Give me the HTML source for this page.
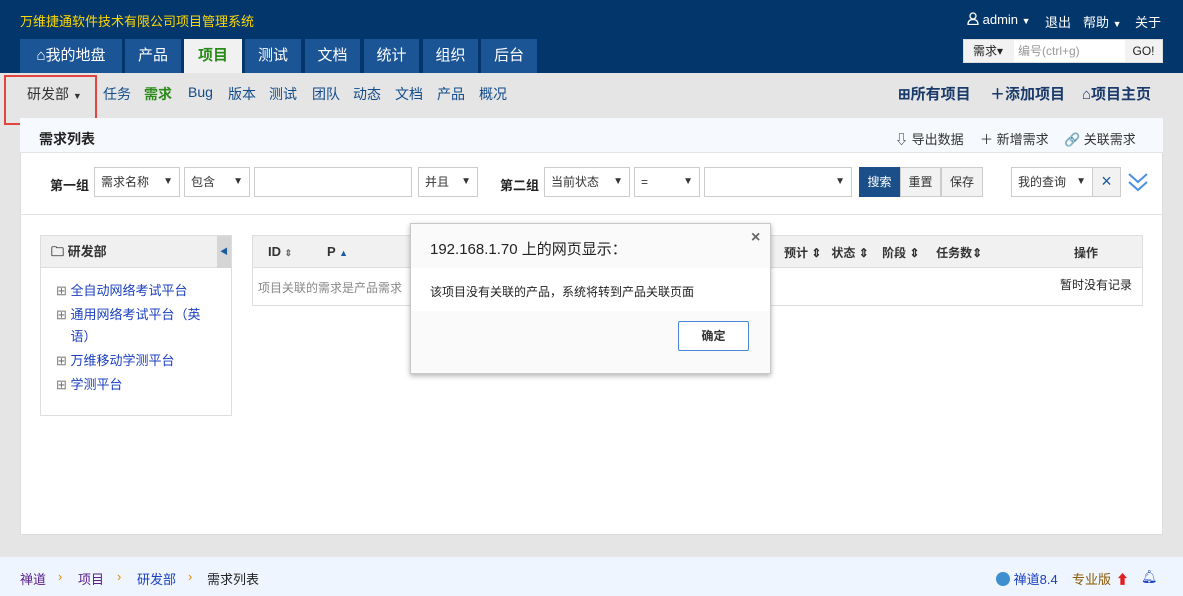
<!DOCTYPE html>
<html><head><meta charset="utf-8"><style>
*{margin:0;padding:0;box-sizing:border-box}
body{width:1183px;height:596px;overflow:hidden;background:#e5e5e5;font-family:"Liberation Sans","Noto Sans CJK SC",sans-serif;font-size:13px;color:#333;position:relative}
.abs{position:absolute}
#hd{left:0;top:0;width:1183px;height:73px;background:#03366a}
.tab{position:absolute;top:39px;height:34px;background:#1b5596;color:#fff;font-size:15px;line-height:34px;text-align:center}
.tab.on{background:#f1f1f1;color:#2a8a1a;font-weight:bold}
.sub{position:absolute;top:84px;font-size:14px;color:#124b8a}
.rn{position:absolute;top:83px;font-weight:bold;font-size:15px;color:#1a3a6a}
.sel{position:absolute;height:30px;border:1px solid #ccc;background:#fff;font-size:12px;line-height:28px;padding-left:6px}
.sel.a:after{content:"▼";position:absolute;right:6px;font-size:10px}
.hl{position:absolute;top:12px;color:#fff;font-size:13px}
.pa{position:absolute;top:129px;color:#333}
.ft{position:absolute;top:569px;font-size:13px}
</style></head><body>
<div id="hd" class="abs"></div>
<div class="abs" style="left:20px;top:11px;color:#ffd800;font-size:13px">万维捷通软件技术有限公司项目管理系统</div>
<div class="hl" style="left:967px"><svg width="12" height="13" viewBox="0 0 12 13" style="vertical-align:-1px"><circle cx="6" cy="4" r="3" fill="none" stroke="#fff" stroke-width="1.3"/><path d="M1 12.5Q1 7.5 6 7.5Q11 7.5 11 12.5Z" fill="none" stroke="#fff" stroke-width="1.3"/></svg> admin <span style="font-size:9px">▼</span></div>
<div class="hl" style="left:1045px">退出</div>
<div class="hl" style="left:1083px">帮助 <span style="font-size:9px">▼</span></div>
<div class="hl" style="left:1135px">关于</div>
<div class="abs" style="left:963px;top:39px;width:200px;height:24px;background:#fff;border:1px solid #ddd"></div>
<div class="abs" style="left:964px;top:40px;width:50px;height:22px;background:#f2f2f2;font-size:12px;line-height:22px;padding-left:9px;color:#222">需求▾</div>
<div class="abs" style="left:1018px;top:40px;font-size:12px;line-height:22px;color:#999">编号(ctrl+g)</div>
<div class="abs" style="left:1125px;top:40px;width:37px;height:22px;background:#f2f2f2;font-size:12px;line-height:22px;text-align:center;color:#222">GO!</div>
<div class="tab" style="left:20px;width:102px">⌂我的地盘</div>
<div class="tab" style="left:125px;width:56px">产品</div>
<div class="tab on" style="left:184px;width:58px">项目</div>
<div class="tab" style="left:245px;width:56px">测试</div>
<div class="tab" style="left:305px;width:55px">文档</div>
<div class="tab" style="left:364px;width:55px">统计</div>
<div class="tab" style="left:423px;width:55px">组织</div>
<div class="tab" style="left:481px;width:56px">后台</div>
<div class="abs" style="left:4px;top:75px;width:93px;height:50px;border:2px solid #e2443f"></div>
<div class="sub" style="left:27px;color:#333">研发部 <span style="font-size:9px">▼</span></div>
<div class="sub" style="left:103px">任务</div>
<div class="sub" style="left:144px;color:#2a8a1a;font-weight:bold">需求</div>
<div class="sub" style="left:188px">Bug</div>
<div class="sub" style="left:228px">版本</div>
<div class="sub" style="left:269px">测试</div>
<div class="sub" style="left:312px">团队</div>
<div class="sub" style="left:353px">动态</div>
<div class="sub" style="left:395px">文档</div>
<div class="sub" style="left:437px">产品</div>
<div class="sub" style="left:479px">概况</div>
<div class="rn" style="left:898px">⊞所有项目</div>
<div class="rn" style="left:990px">＋添加项目</div>
<div class="rn" style="left:1082px">⌂项目主页</div>
<div class="abs" style="left:20px;top:118px;width:1143px;height:417px;background:#fff;border:1px solid #ddd"></div>
<div class="abs" style="left:20px;top:118px;width:1143px;height:35px;background:#f6f9fd;border-bottom:1px solid #e2e2e2"></div>
<div class="abs" style="left:39px;top:129px;font-weight:bold;font-size:14px;color:#222">需求列表</div>
<div class="pa" style="left:895px">⇩ 导出数据</div>
<div class="pa" style="left:980px">＋ 新增需求</div>
<div class="pa" style="left:1064px">🔗 关联需求</div>
<div class="abs" style="left:50px;top:175px;font-weight:bold;color:#222">第一组</div>
<div class="sel a" style="left:94px;top:167px;width:86px">需求名称</div>
<div class="sel a" style="left:184px;top:167px;width:66px">包含</div>
<div class="sel" style="left:254px;top:167px;width:158px"></div>
<div class="sel a" style="left:418px;top:167px;width:60px">并且</div>
<div class="abs" style="left:500px;top:175px;font-weight:bold;color:#222">第二组</div>
<div class="sel a" style="left:544px;top:167px;width:86px">当前状态</div>
<div class="sel a" style="left:634px;top:167px;width:66px">=</div>
<div class="sel a" style="left:704px;top:167px;width:148px"></div>
<div class="abs" style="left:859px;top:167px;width:41px;height:30px;background:#1a4f8a;color:#fff;font-size:12px;line-height:30px;text-align:center">搜索</div>
<div class="abs" style="left:900px;top:167px;width:41px;height:30px;background:#f2f2f2;border:1px solid #ccc;font-size:12px;line-height:28px;text-align:center">重置</div>
<div class="abs" style="left:941px;top:167px;width:42px;height:30px;background:#f2f2f2;border:1px solid #ccc;font-size:12px;line-height:28px;text-align:center">保存</div>
<div class="sel a" style="left:1011px;top:167px;width:82px">我的查询</div>
<div class="abs" style="left:1092px;top:167px;width:29px;height:30px;background:#f2f2f2;border:1px solid #ccc;color:#1a5aa0;font-size:18px;line-height:26px;text-align:center">×</div>
<svg class="abs" style="left:1127px;top:171px" width="22" height="22" viewBox="0 0 22 22"><path d="M2 3L11 11L20 3M2 11L11 19L20 11" fill="none" stroke="#4a90e2" stroke-width="2"/></svg>
<div class="abs" style="left:20px;top:214px;width:1143px;border-top:1px solid #e2e2e2"></div>
<div class="abs" style="left:40px;top:235px;width:192px;height:181px;border:1px solid #ddd"></div>
<div class="abs" style="left:41px;top:236px;width:190px;height:32px;background:#f0f0f0;border-bottom:1px solid #ddd;font-weight:bold;line-height:32px;padding-left:10px">🗀 研发部</div>
<div class="abs" style="left:217px;top:236px;width:14px;height:32px;background:#d5d5d5;color:#1a5aa0;font-size:8px;line-height:32px;text-align:center">◀</div>
<div class="abs" style="left:56px;top:280px;color:#1a3fbf;line-height:22px;font-size:13px;width:160px"><span style="color:#777">⊞</span> 全自动网络考试平台<br><div style="height:2px"></div><span style="color:#777">⊞</span> 通用网络考试平台（英<br>&nbsp;&nbsp;&nbsp;&nbsp;语）<div style="height:2px"></div><span style="color:#777">⊞</span> 万维移动学测平台<div style="height:2px"></div><span style="color:#777">⊞</span> 学测平台</div>
<div class="abs" style="left:252px;top:235px;width:891px;height:71px;border:1px solid #ddd"></div>
<div class="abs" style="left:253px;top:236px;width:889px;height:32px;background:#f1f1f1;border-bottom:1px solid #ddd"></div>
<div class="abs" style="left:268px;top:244px;font-weight:bold;font-size:13px">ID <span style="font-size:9px;color:#666">⇕</span></div>
<div class="abs" style="left:327px;top:244px;font-weight:bold">P <span style="font-size:9px;color:#1a5aa0">▲</span></div>
<div class="abs" style="left:784px;top:244px;font-weight:bold;font-size:12px">预计 ⇕ &nbsp; 状态 ⇕ &nbsp;&nbsp; 阶段 ⇕ &nbsp;&nbsp;&nbsp; 任务数⇕</div>
<div class="abs" style="left:1074px;top:244px;font-weight:bold;font-size:12px">操作</div>
<div class="abs" style="left:258px;top:279px;color:#888;font-size:12px">项目关联的需求是产品需求</div>
<div class="abs" style="left:1060px;top:276px;font-size:12px;color:#222">暂时没有记录</div>
<div class="abs" style="left:410px;top:223px;width:361px;height:151px;background:#fafafa;border:1px solid #c8c8c8;box-shadow:0 2px 5px rgba(0,0,0,.3)"></div>
<div class="abs" style="left:411px;top:268px;width:359px;height:43px;background:#fff"></div>
<div class="abs" style="left:430px;top:238px;font-size:15px;color:#222">192.168.1.70 上的网页显示：</div>
<div class="abs" style="left:751px;top:229px;font-size:16px;color:#666;font-weight:bold">×</div>
<div class="abs" style="left:430px;top:283px;font-size:12px;color:#222">该项目没有关联的产品，系统将转到产品关联页面</div>
<div class="abs" style="left:678px;top:321px;width:71px;height:30px;border:1px solid #4a85d8;background:#fff;border-radius:2px;font-size:12px;font-weight:bold;line-height:28px;text-align:center">确定</div>
<div class="abs" style="left:0;top:557px;width:1183px;height:39px;background:#eef5ff"></div>
<div class="ft" style="left:20px;color:#5a1d8a">禅道</div>
<div class="ft" style="left:58px;color:#e08a00">›</div>
<div class="ft" style="left:78px;color:#5a1d8a">项目</div>
<div class="ft" style="left:117px;color:#e08a00">›</div>
<div class="ft" style="left:137px;color:#1a3fbf">研发部</div>
<div class="ft" style="left:188px;color:#e08a00">›</div>
<div class="ft" style="left:207px;color:#222">需求列表</div>
<div class="ft" style="left:996px;color:#1a3fbf"><span style="display:inline-block;width:14px;height:14px;border-radius:50%;background:#3d8fcf;vertical-align:-2px"></span> 禅道8.4</div>
<div class="ft" style="left:1072px;color:#8a5a00">专业版</div>
<div class="ft" style="left:1116px;color:#e02020">⬆</div>
<div class="ft" style="left:1141px;color:#1a3fbf">🔔︎</div>
</body></html>
